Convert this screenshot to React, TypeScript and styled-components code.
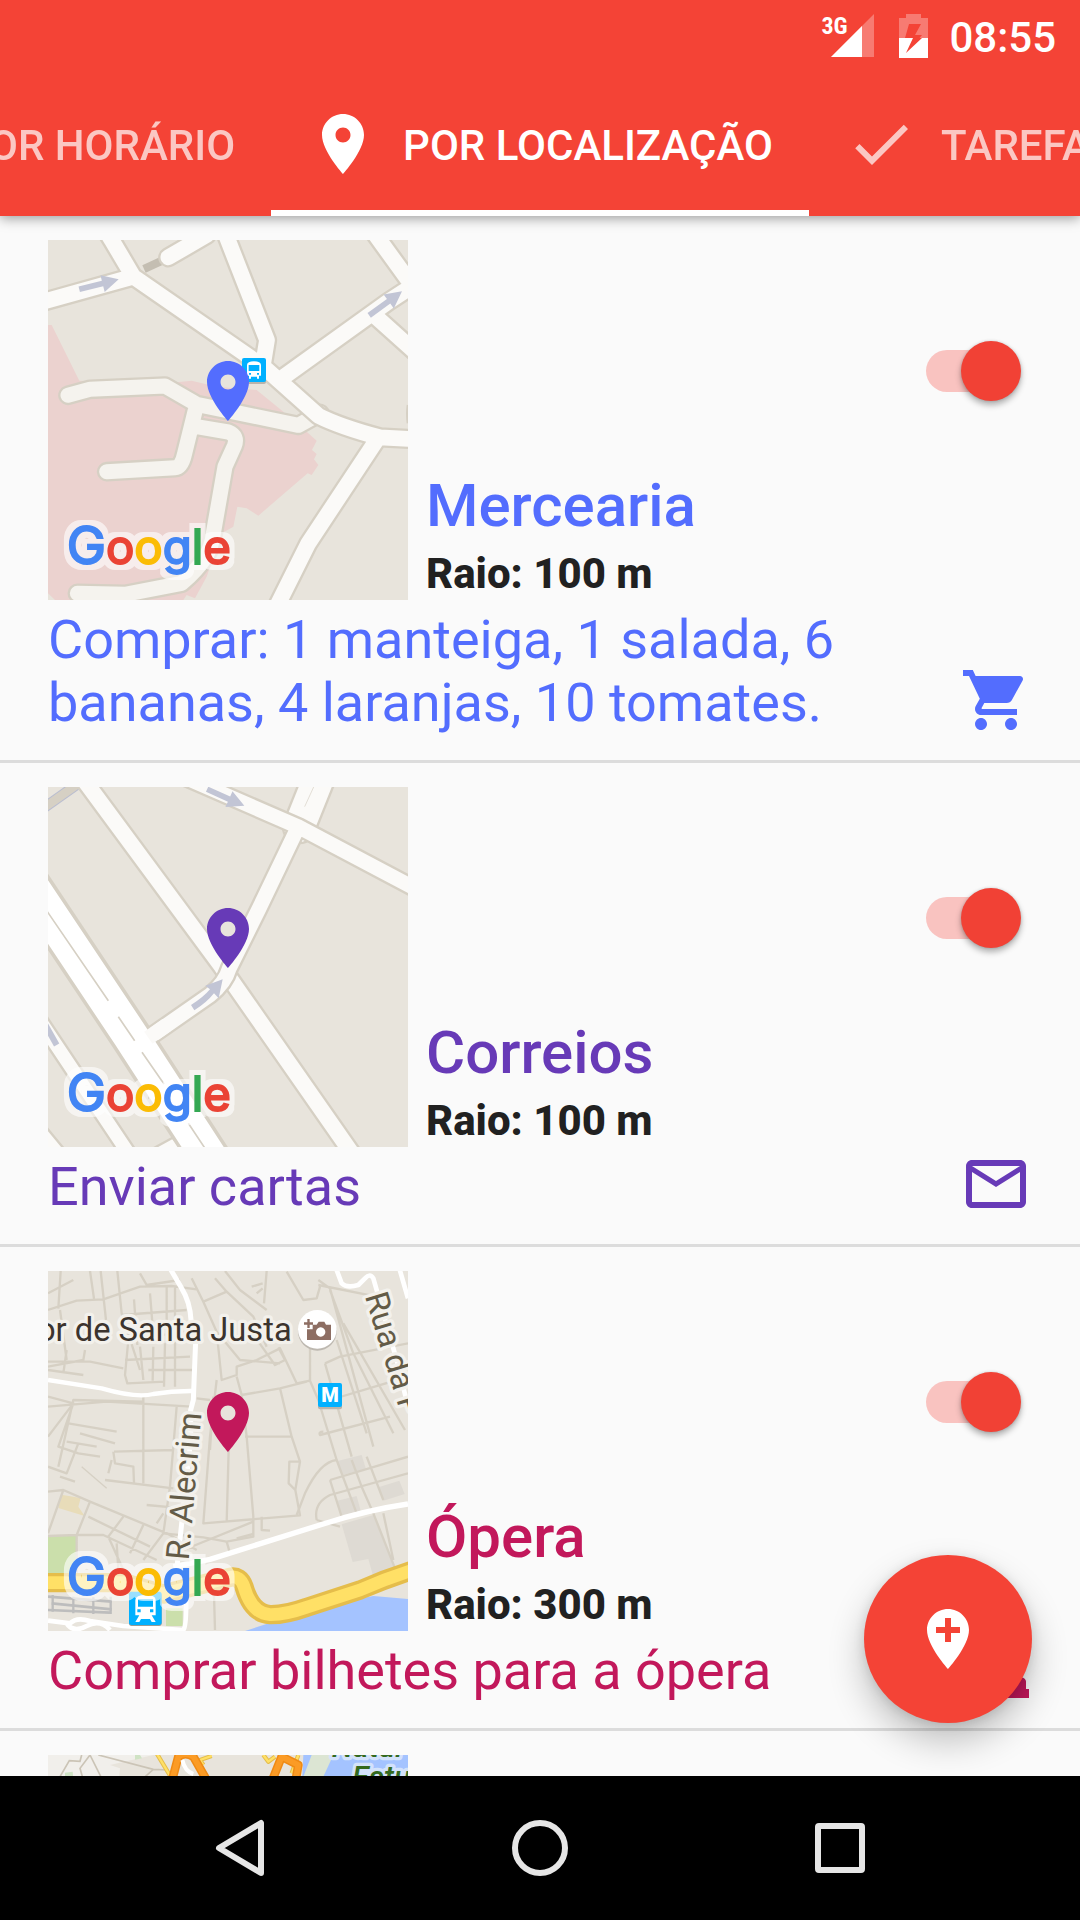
import React, { useState } from "react";
import styled, { createGlobalStyle } from "styled-components";

const GlobalStyle = createGlobalStyle`
  *, *::before, *::after { box-sizing: border-box; }
  body { margin: 0; background: #fafafa; font-family: Roboto, "Noto Sans", sans-serif; }
  button { font: inherit; border: 0; padding: 0; background: none; cursor: pointer; }
  h2, p, ul { margin: 0; padding: 0; }
`;

/* ---------- Screen ---------- */

const Screen = styled.div`
  display: flex;
  flex-direction: column;
  height: 100vh;
  overflow: hidden;
  background: #fafafa;
  color: #212121;
`;

const Header = styled.header`
  position: relative;
  z-index: 1;
  flex: none;
  background: #f44336;
  color: #fff;
  box-shadow: 0 2px 12px rgba(0, 0, 0, 0.4);
`;

const StatusBar = styled.div`
  display: flex;
  align-items: center;
  justify-content: flex-end;
  height: 72px;
  padding-right: 24px;
`;

const Signal = styled.div`
  position: relative;
  width: 53px;
  height: 44px;
  margin-right: 25px;
  svg { display: block; margin-left: auto; }
`;

const Network = styled.span`
  position: absolute;
  left: 0;
  top: 0;
  font-size: 24px;
  line-height: 24px;
  font-weight: 700;
  font-family: "Roboto Condensed", Roboto, sans-serif;
`;

const Clock = styled.time`
  margin-left: 21px;
  padding-top: 4px;
  font-size: 42px;
  line-height: 50px;
  font-weight: 500;
`;

const Tabs = styled.nav`
  display: grid;
  grid-template-columns: minmax(0, 1fr) auto minmax(0, 1fr);
  height: 144px;
  overflow: hidden;
`;

const Tab = styled.button<{ $active?: boolean; $align?: string }>`
  display: flex;
  align-items: center;
  justify-content: ${(p) => p.$align ?? "center"};
  gap: 24px;
  padding: 6px 36px 0;
  border-bottom: 6px solid ${(p) => (p.$active ? "#fff" : "transparent")};
  color: #fff;
  font-size: 42px;
  line-height: 50px;
  font-weight: 500;
  white-space: nowrap;
  svg, span { flex: none; opacity: ${(p) => (p.$active ? 1 : 0.7)}; }
  span { padding-top: 4px; }
`;

const Main = styled.main`
  position: relative;
  flex: 1;
  min-height: 0;
`;

const List = styled.ul`
  height: 100%;
  overflow-y: auto;
  scrollbar-width: none;
  list-style: none;
`;

const Item = styled.li<{ $color: string }>`
  padding: 24px 48px;
  border-bottom: 3px solid #dcdcdc;
  color: ${(p) => p.$color};
`;

const Top = styled.div`
  display: flex;
  gap: 18px;
`;

const MapSvg = styled.svg`
  display: block;
  flex: none;
  width: 360px;
  height: 360px;
  background: #e8e4dc;
`;

const Info = styled.div`
  display: flex;
  flex: 1;
  flex-direction: column;
  padding: 101px 0 1px;
`;

const Switch = styled.input`
  position: relative;
  align-self: flex-end;
  appearance: none;
  width: 96px;
  height: 60px;
  margin: 0 10px 0 0;
  cursor: pointer;
  &::before {
    content: "";
    position: absolute;
    inset: 9px 4px 9px 0;
    border-radius: 21px;
    background: #c4c4c4;
  }
  &::after {
    content: "";
    position: absolute;
    left: 0;
    top: 0;
    width: 60px;
    height: 60px;
    border-radius: 50%;
    background: #f1f1f1;
    box-shadow: 0 4px 6px rgba(0, 0, 0, 0.3), 0 0 3px rgba(0, 0, 0, 0.15);
  }
  &:checked::before { background: #f9c3c0; }
  &:checked::after { left: 35px; background: #f14135; }
`;

const Title = styled.h2`
  margin-top: auto;
  margin-bottom: 8px;
  font-size: 60px;
  line-height: 70px;
  font-weight: 500;
`;

const Radius = styled.p`
  color: #212121;
  font-size: 42px;
  line-height: 50px;
  font-weight: 800;
`;

const Bottom = styled.div`
  display: flex;
  align-items: flex-end;
  justify-content: space-between;
`;

const Description = styled.p`
  padding: 8px 0 2px;
  font-size: 54px;
  line-height: 63px;
`;

const Icon = styled.svg`
  display: block;
  flex: none;
  width: 72px;
  height: 72px;
  fill: currentColor;
`;

const Fab = styled.button`
  position: absolute;
  right: 48px;
  bottom: 53px;
  display: grid;
  place-items: center;
  width: 168px;
  height: 168px;
  border-radius: 50%;
  background: #f44336;
  color: #fff;
  box-shadow: 0 18px 36px rgba(0, 0, 0, 0.24), 0 2px 12px rgba(0, 0, 0, 0.12);
`;

const NavBar = styled.nav`
  position: relative;
  display: grid;
  flex: none;
  grid-template-columns: repeat(3, minmax(0, 300px));
  justify-content: center;
  height: 144px;
  background: #000;
`;

const NavButton = styled.button`
  display: grid;
  place-items: center;
  svg { fill: none; stroke: #e6e6e6; stroke-width: 6; stroke-linejoin: round; }
`;

/* ---------- Icons ---------- */

const PIN =
  "M12 2C8.13 2 5 5.13 5 9c0 5.25 7 13 7 13s7-7.75 7-13c0-3.87-3.13-7-7-7zm0 9.5c-1.38 0-2.5-1.12-2.5-2.5s1.12-2.5 2.5-2.5 2.5 1.12 2.5 2.5-1.12 2.5-2.5 2.5z";
const PIN_PLUS =
  "M12 2C8.13 2 5 5.13 5 9c0 5.25 7 13 7 13s7-7.75 7-13c0-3.87-3.13-7-7-7zm4 8h-3v3h-2v-3H8V8h3V5h2v3h3v2z";
const CHECK = "M9 16.17L4.83 12l-1.42 1.41L9 19 21 7l-1.41-1.41z";
const CLOCK =
  "M11.99 2C6.47 2 2 6.48 2 12s4.47 10 9.99 10C17.52 22 22 17.52 22 12S17.52 2 11.99 2zM12 20c-4.42 0-8-3.58-8-8s3.58-8 8-8 8 3.58 8 8-3.58 8-8 8zm.5-13H11v6l5.25 3.15.75-1.23-4.5-2.67z";
const CART =
  "M7 18c-1.1 0-1.99.9-1.99 2S5.900 22 7 22s2-.9 2-2-.9-2-2-2zM1 2v2h2l3.600 7.590-1.350 2.450c-.16.28-.25.61-.25.96 0 1.100.9 2 2 2h12v-2H7.420c-.14 0-.25-.11-.25-.25l.030-.12.900-1.630h7.450c.75 0 1.410-.41 1.750-1.030l3.580-6.490c.08-.14.12-.31.12-.480 0-.55-.45-1-1-1H5.210l-.940-2H1zm16 16c-1.100 0-1.990.9-1.990 2s.890 2 1.990 2 2-.9 2-2-.9-2-2-2z";
const MAIL =
  "M20 4H4c-1.100 0-1.990.9-1.990 2L2 18c0 1.100.9 2 2 2h16c1.100 0 2-.9 2-2V6c0-1.100-.9-2-2-2zm0 14H4V8l8 5 8-5v10zm-8-7L4 6h16l-8 5z";
const STAGE =
  "M1 22v-3h1v-2.500c0-.8.7-1.300 1.500-1.300h17c.8 0 1.500.6 1.500 1.300V19h1v3zM6 13.500a6 6 0 0 1 12 0z";

const Glyph = ({ d }: { d: string }) => (
  <Icon viewBox="0 0 24 24" aria-hidden="true">
    <path d={d} />
  </Icon>
);

/* ---------- Maps ---------- */

const CASING = "#d6d0c4";
const ROAD = "#fbfaf8";
const LANE = "#f5f3ee";

const Roads = ({ d, fill = ROAD, w = 47 }: { d: string; fill?: string; w?: number }) => (
  <g fill="none" strokeLinejoin="round" strokeLinecap="round">
    <path d={d} stroke={CASING} strokeWidth={w + 14} />
    <path d={d} stroke={fill} strokeWidth={w} />
  </g>
);

const Arrow = ({ x, y, angle }: { x: number; y: number; angle: number }) => (
  <path
    d="M0 0L-50 27V9H-122V-8H-50V-25Z"
    fill="#c2c5d5"
    transform={`translate(${x} ${y}) rotate(${angle})`}
  />
);

const Letters = () => (
  <>
    <tspan fill="#4285f4" stroke="#4285f4" fontSize="158">G</tspan>
    <tspan fill="#ea4335" stroke="#ea4335">o</tspan>
    <tspan fill="#fbbc05" stroke="#fbbc05">o</tspan>
    <tspan fill="#4285f4" stroke="#4285f4">g</tspan>
    <tspan fill="#34a853" stroke="#34a853">l</tspan>
    <tspan fill="#ea4335" stroke="#ea4335">e</tspan>
  </>
);

const MapTile = ({
  top,
  pin,
  label,
  children,
}: {
  top: number;
  pin?: string;
  label: string;
  children: React.ReactNode;
}) => (
  <MapSvg viewBox={`24 ${top} 1080 1080`} role="img" aria-label={label}>
    {children}
    {pin && (
      <g transform={`translate(0 ${top})`}>
        <filter id={`halo${top}`} x="-10%" y="-20%" width="120%" height="140%" colorInterpolationFilters="sRGB">
          <feMorphology in="SourceAlpha" operator="dilate" radius="14" result="grown" />
          <feGaussianBlur in="grown" stdDeviation="2" result="soft" />
          <feFlood floodColor="#fff" floodOpacity="0.6" />
          <feComposite in2="soft" operator="in" result="halo" />
          <feMerge>
            <feMergeNode in="halo" />
            <feMergeNode in="SourceGraphic" />
          </feMerge>
        </filter>
        <text
          x="80"
          y="973"
          fontFamily="Inter, sans-serif"
          fontSize="142"
          strokeWidth="6"
          filter={`url(#halo${top})`}
        >
          <Letters />
        </text>
        <path d={PIN} fill={pin} transform="translate(456 345) scale(9)" />
      </g>
    )}
  </MapSvg>
);

const GroceryMap = () => (
  <MapTile top={30} pin="#536dfe" label="Mapa: Mercearia">
    <path
      fill="#ebd2cf"
      d="M24 285H35L118 452L380 460L455 452L530 470L650 480L730 545L800 605L830 632L816 660L830 672L822 688L835 705L815 735L803 730L655 857L620 835L592 830L580 890L545 910L500 1040L465 1105L440 1095L430 1110H45L24 1090Z"
    />
    <path d="M312 117L364 93" stroke="#c4beb2" strokeWidth="24" />
    <Roads
      fill={LANE}
      w={45}
      d="M84 496L150 478L375 468L470 523L775 586L840 550M466 540L434 670Q425 712 405 713L200 725M470 590L565 606Q595 618 583 648L555 710L520 910Q515 985 425 1060L255 1093L112 1090"
    />
    <Roads d="M0 218L280 140L215 30L190 -10M280 140L670 410L835 557Q900 590 1020 622L1130 628M560 20L681 330L668 410M385 82L500 15M725 445L1045 215L1130 160M1000 5L1130 185M1010 262L1130 370M1010 630L805 940L700 1150" />
    <path d="M1104 525q-4 25 0 55" stroke={CASING} strokeWidth="8" fill="none" />
    <Arrow x={236} y={148} angle={-14} />
    <Arrow x={1086} y={184} angle={-36} />
    <rect x="606" y="390" width="72" height="72" rx="6" fill="#b9b4ab" />
    <rect x="606" y="384" width="72" height="72" rx="6" fill="#00b0ff" />
    <path
      fillRule="evenodd"
      fill="#fff"
      d="M621 405q1-11 21-11t21 11v32h-6v9h-6v-6h-18v6h-6v-9h-6zM626 405v18h32v-18zM627 429h6v5h-6zM651 429h6v5h-6z"
    />
  </MapTile>
);

const PostMap = () => (
  <MapTile top={21} pin="#673ab7" label="Mapa: Correios">
    <path d="M0 92L130 0" stroke="#b9bdd0" strokeWidth="32" />
    <path d="M0 92L130 0" stroke={CASING} strokeWidth="26" />
    <Roads d="M110 -30L545 560L960 1155" />
    <Roads d="M838 -10L778 140" w={92} />
    <Roads
      d="M430 -10L775 140L1130 328M775 140L655 390L568 565Q555 610 510 645L335 767"
      w={44}
    />
    <path d="M821 21L794 80" stroke={CASING} strokeWidth="2" />
    <Arrow x={613} y={77} angle={24} />
    <path
      fill="#c2c5d5"
      d="M548 598L536 655L522 640Q500 668 463 691L453 675Q490 652 510 628L496 617Z"
    />
    <Roads d="M-40 662L290 1157" w={40} />
    <path d="M16 735L50 795" stroke="#c2c5d5" strokeWidth="18" />
    <path d="M20 1043L75 1110H20Z" fill={ROAD} stroke={CASING} strokeWidth="7" />
    <path d="M340 1105L398 1073L430 1110Z" fill={ROAD} stroke={CASING} strokeWidth="7" />
    <g fill="none">
      <path d="M-120 180L270 765L580 1243" stroke={CASING} strokeWidth="127" />
      <path d="M-120 180L270 765L580 1243" stroke="#fff" strokeWidth="106" />
      <path
        d="M20 392L205 662M235 710L284 782M306 817L372 912M445 1030L495 1105"
        stroke={CASING}
        strokeWidth="5"
      />
    </g>
    <path d="M380 735L325 773" stroke={ROAD} strokeWidth="44" />
  </MapTile>
);

const OperaMap = () => (
  <MapTile top={33} pin="#c2185b" label="Mapa: Ópera">
    <path d="M24 828H108V942H24ZM378 1045H428V1098H378Z" fill="#cbdfab" />
    <path d="M64 704L122 714L115 740L134 768L55 744Z" fill="#e8dcb9" />
    <path
      d="M890 604L965 585L978 628L906 645ZM1015 682L1078 662L1094 702L1030 722ZM892 722L950 708L962 752L905 766ZM905 793L1000 765L1063 925L1040 950L1000 950L985 897L938 906Z"
      fill="#dedad3"
    />
    <path d="M615 1113L700 1085L830 1040L1000 1008L1104 1017V1113Z" fill="#a4c3ff" />
    <g fill="none" stroke={CASING} strokeWidth="7" strokeLinejoin="round">
      <path d="M62 33L55 146M24 150L110 122L190 118L300 80L395 78L470 88M150 33L162 116M182 33L198 180M232 33L245 160L300 330M24 100L100 60M282 118L292 255M330 100L342 250M380 80V250M405 80V380M245 165L440 150M300 40L320 75L420 60M290 235L440 215M60 150L80 300M24 305L150 305L250 325M80 270L70 340M135 270L130 300L24 320M265 240L255 345L262 370L375 365M255 300L450 290M300 260L310 360M340 260L338 362M375 250L372 380M325 330L460 330M24 330L130 345" />
      <path d="M455 55L490 125L530 215L600 300L720 310M490 125L560 95L525 55M560 95L640 170L680 260M555 33L600 90L680 150M680 33L672 130M530 215L545 360L590 345V320L650 300L720 265L770 370L810 362M655 245L705 315L735 300L715 262M530 360L510 530L490 790L780 766L766 690L780 605H748L746 670L766 690M510 570L520 410M590 350L605 405L720 385L755 530L780 605M605 405L620 530L640 770V830L560 845L490 832L370 820M615 530H755M566 570L560 785M720 385L800 365M470 415L510 420M635 80L668 70M650 100L668 85" />
      <path d="M810 180V362L835 420L890 600L950 760M835 60L870 85L1000 560M835 75L1010 110M870 90L940 280L1060 520M890 240L980 520M855 310L935 590M910 190L1095 510M855 310L900 290L1104 250M870 420L1104 350M850 515Q835 515 840 525L1050 470M890 600Q840 605 795 700L770 765M870 660L1104 590M830 780Q820 730 870 705L1104 640M870 660L905 770M935 600L965 680L1000 760L1065 925M980 590L1030 720M1030 760L1060 900M830 780L900 800M740 35L790 120L830 115L840 80" />
      <path d="M24 410L100 430L24 530M100 430L55 560L115 580L180 590M310 410V670M55 620L100 420L310 425M24 440L200 425L455 440M120 520L225 550M85 490L230 515M80 545L170 560M220 575L225 610L280 620L282 668M222 575L400 570M215 600L205 640M24 620L80 640L115 550M195 660L400 685M60 650L105 665M24 695L70 690L150 725L380 820L470 870M70 690L24 820M150 725L110 825L24 828M110 825H190L350 900M250 770L205 830L250 930M310 795L270 880M370 820L310 900M320 735L430 745M370 760L350 790M145 770L330 860M230 850L235 930M110 828V940M410 440L390 680L370 820M520 930L525 1110M560 845L570 880M430 870L640 785M665 770V810L690 812M590 835L640 822" />
      <path d="M125 620L200 685" strokeWidth="4" />
    </g>
    <g fill="none" stroke="#fff" strokeLinejoin="round">
      <path d="M390 25L425 85Q450 125 453 180L468 215L460 420L452 450V540L410 930" strokeWidth="15" />
      <path d="M24 360L185 385Q290 415 340 402Q400 392 462 393" strokeWidth="13" />
      <path d="M400 920L510 898L840 795Q980 750 1104 732" strokeWidth="16" />
      <path d="M888 25L905 70Q920 85 955 75L975 55Q990 38 1000 55L1070 300L1104 440M1078 25L1104 115" strokeWidth="14" />
      <path d="M24 1082L90 1090Q110 1070 150 1083L250 1098L430 1110Q440 1100 438 1010M80 1090Q100 1120 140 1098T210 1110" strokeWidth="14" />
    </g>
    <g fill="none" stroke="#bdbdbd">
      <path d="M24 1010L215 1025M35 1030L215 1048M24 1050L210 1058" strokeWidth="8" />
      <path d="M38 1005V1055M100 1010V1060M160 1012V1062M212 1010V1062" strokeWidth="7" />
    </g>
    <g fill="none" strokeLinejoin="round">
      <path d="M10 968H250L370 1002L570 952Q600 945 612 980Q635 1060 690 1064Q735 1065 800 1042L960 990Q1040 955 1120 930" stroke="#e5bd4b" strokeWidth="58" />
      <path d="M10 968H250L370 1002L570 952Q600 945 612 980Q635 1060 690 1064Q735 1065 800 1042L960 990Q1040 955 1120 930" stroke="#ffe066" strokeWidth="38" />
    </g>
    <g
      fontFamily="Roboto, sans-serif"
      fontSize="98"
      paintOrder="stroke"
      stroke="#f3f1ec"
      strokeWidth="20"
      strokeLinejoin="round"
    >
      <text x="755" y="243" textAnchor="end" fill="#3c342e">or de Santa Justa</text>
      <text fill="#635b47" transform="translate(446 902) rotate(-85)">R. Alecrim</text>
      <text fill="#635b47" transform="translate(974 108) rotate(73)">Rua da P</text>
    </g>
    <circle cx="832" cy="214" r="58" fill="#bdb8b0" />
    <circle cx="832" cy="208" r="58" fill="#fff" />
    <path
      fillRule="evenodd"
      fill="#8d6e63"
      d="M801 208H818V194H830L836 185H853L858 194H873V240H801ZM842 202a14 14 0 1 0 .1 0zM802 177h7v10h10v7h-10v10h-7v-10h-10v-7h10z"
    />
    <rect x="834" y="376" width="72" height="72" rx="6" fill="#b9b4ab" />
    <rect x="834" y="369" width="72" height="72" rx="6" fill="#00b0ff" />
    <text x="870" y="427" textAnchor="middle" fontFamily="Roboto, sans-serif" fontWeight="900" fontSize="60" fill="#fff">
      M
    </text>
    <rect x="267" y="1000" width="98" height="98" rx="8" fill="#9a9a94" />
    <rect x="267" y="995" width="98" height="100" rx="8" fill="#00b0ff" />
    <path
      fillRule="evenodd"
      fill="#fff"
      d="M286 1020Q287 1005 317 1005T347 1020V1066H335L347 1086H335L330 1077H303L298 1086H286L298 1066H286ZM294 1018V1040H339V1018ZM292 1048h10v9h-10zM330 1048h10v9h-10z"
    />
  </MapTile>
);

const CoastMap = () => (
  <MapTile top={15} label="Mapa">
    <path d="M24 15H340L210 45L240 55L150 1095H24Z" fill="#f1efeb" />
    <path d="M285 15H300L306 25L285 29ZM75 68L98 65L100 85H75Z" fill="#cfe3c4" />
    <g fill="none" stroke="#cbc4b6" strokeWidth="5">
      <path d="M60 80L88 32L120 34L125 15M150 15L120 55L130 90M150 15L185 85M175 15L340 58L385 60M340 58L310 85" />
    </g>
    <path d="M790 15H1104V1095H740Z" fill="#a4c3ff" />
    <path d="M815 15H880L850 80H790Z" fill="#dce5d3" />
    <g fill="none" strokeLinejoin="round">
      <path d="M350 10L395 85M515 18L480 30L490 45M670 15L685 35L705 20M775 15L755 70" stroke="#e5bd4b" strokeWidth="13" />
      <path d="M350 10L395 85M515 18L480 30L490 45M670 15L685 35L705 20M775 15L755 70" stroke="#ffe066" strokeWidth="7" />
      <path d="M395 95L415 20Q435 5 460 20L500 90M695 95L725 20L775 45L768 85" stroke="#ef8a14" strokeWidth="26" />
      <path d="M395 95L415 20Q435 5 460 20L500 90M695 95L725 20L775 45L768 85" stroke="#fb9b25" strokeWidth="17" />
      <path d="M427 30Q435 65 460 72" stroke="#fff" strokeWidth="12" />
    </g>
    <g
      fontFamily="Roboto, sans-serif"
      fontSize="92"
      fontStyle="italic"
      fontWeight="500"
      fill="#33691e"
      paintOrder="stroke"
      stroke="#d3e2fb"
      strokeWidth="20"
      strokeLinejoin="round"
    >
      <text x="875" y="20">Natur</text>
      <text x="936" y="114">Estu</text>
    </g>
  </MapTile>
);

/* ---------- Content ---------- */

type Reminder = {
  id: string;
  color: string;
  title: string;
  radius: string;
  description: string;
  icon: string;
  Map: () => React.ReactElement;
};

const reminders: Reminder[] = [
  {
    id: "mercearia",
    color: "#536dfe",
    title: "Mercearia",
    radius: "Raio: 100 m",
    description: "Comprar: 1 manteiga, 1 salada, 6 bananas, 4 laranjas, 10 tomates.",
    icon: CART,
    Map: GroceryMap,
  },
  {
    id: "correios",
    color: "#673ab7",
    title: "Correios",
    radius: "Raio: 100 m",
    description: "Enviar cartas",
    icon: MAIL,
    Map: PostMap,
  },
  {
    id: "opera",
    color: "#c2185b",
    title: "Ópera",
    radius: "Raio: 300 m",
    description: "Comprar bilhetes para a ópera",
    icon: STAGE,
    Map: OperaMap,
  },
];

const ReminderItem = ({ item }: { item: Reminder }) => {
  const [on, setOn] = useState(true);
  return (
    <Item $color={item.color}>
      <Top>
        <item.Map />
        <Info>
          <Switch
            type="checkbox"
            role="switch"
            aria-labelledby={item.id}
            checked={on}
            onChange={(e) => setOn(e.target.checked)}
          />
          <Title id={item.id}>{item.title}</Title>
          <Radius>{item.radius}</Radius>
        </Info>
      </Top>
      <Bottom>
        <Description>{item.description}</Description>
        <Glyph d={item.icon} />
      </Bottom>
    </Item>
  );
};

export default function App() {
  return (
    <Screen>
      <GlobalStyle />
      <Header>
        <StatusBar>
          <Signal>
            <Network>3G</Network>
            <svg width="43" height="43" viewBox="0 0 43 43" aria-hidden="true">
              <path d="M43 0V43H0Z" fill="#fff" fillOpacity="0.3" />
              <path d="M31 12V43H0Z" fill="#fff" />
            </svg>
          </Signal>
          <svg width="29" height="44" viewBox="0 0 29 44" aria-hidden="true">
            <path
              fillRule="evenodd"
              fill="#fff"
              fillOpacity="0.3"
              d="M0 4H7V0H22V4H29V24H20.500L23 21H16L22 10H10L6 24H0Z"
            />
            <path d="M0 24H14L7 39L23 24H29V44H0Z" fill="#fff" />
          </svg>
          <Clock>08:55</Clock>
        </StatusBar>
        <Tabs role="tablist">
          <Tab role="tab" aria-selected={false} $align="flex-end">
            <Glyph d={CLOCK} />
            <span>POR HORÁRIO</span>
          </Tab>
          <Tab role="tab" aria-selected={true} $active>
            <Glyph d={PIN} />
            <span>POR LOCALIZAÇÃO</span>
          </Tab>
          <Tab role="tab" aria-selected={false} $align="flex-start">
            <Glyph d={CHECK} />
            <span>TAREFAS</span>
          </Tab>
        </Tabs>
      </Header>
      <Main>
        <List>
          {reminders.map((item) => (
            <ReminderItem key={item.id} item={item} />
          ))}
          <Item $color="#212121">
            <CoastMap />
          </Item>
        </List>
        <Fab aria-label="Adicionar local">
          <Glyph d={PIN_PLUS} />
        </Fab>
      </Main>
      <NavBar>
        <NavButton aria-label="Voltar">
          <svg width="72" height="72" viewBox="0 0 72 72">
            <path d="M15 36L57 11V61Z" />
          </svg>
        </NavButton>
        <NavButton aria-label="Início">
          <svg width="72" height="72" viewBox="0 0 72 72">
            <circle cx="36" cy="36" r="25" />
          </svg>
        </NavButton>
        <NavButton aria-label="Recentes">
          <svg width="72" height="72" viewBox="0 0 72 72">
            <rect x="14" y="14" width="44" height="44" rx="1" />
          </svg>
        </NavButton>
      </NavBar>
    </Screen>
  );
}
